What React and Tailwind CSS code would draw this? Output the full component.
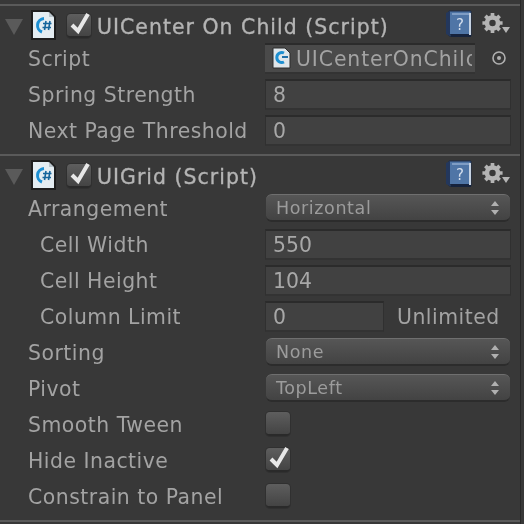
import React from "react";

function Doc({ small }) {
  if (small) {
    return (
      <svg width="19" height="22" viewBox="0 0 19 22" className="shrink-0">
        <path d="M1 1h12l5 5v15H1z" fill="#dfe6ea" stroke="#2c2c2c" />
        <path d="M12 6a5 5 0 1 0 0 9" fill="none" stroke="#1e8fd0" strokeWidth="3" />
        <path d="M10 10h6" stroke="#1e6fa8" strokeWidth="2" />
      </svg>
    );
  }
  return (
    <svg width="25" height="30" viewBox="0 0 25 30" className="shrink-0">
      <path d="M1 1h17l6 6v22H1z" fill="#e4edf2" stroke="#1e1e1e" strokeWidth="2" />
      <path d="M18 2l5 5h-5z" fill="#b9c4cb" />
      <path d="M13 8.5a7 7 0 0 0-2 13.5" fill="none" stroke="#1c8fd3" strokeWidth="3" />
      <path d="M15 11l-1.5 9M19 11l-1.5 9M12 13.5h8.5M11.5 17.5h8.5" stroke="#17669c" strokeWidth="1.6" fill="none" />
    </svg>
  );
}

function Check({ checked }) {
  return (
    <span className="relative block w-[24px] h-[24px] shrink-0 rounded-[4px] border-b-2 border-b-[#2a2a2a] bg-gradient-to-b from-[#5e5e5e] to-[#444444] shadow-[0_0_0_1px_#303030]">
      {checked && (
        <svg width="26" height="26" viewBox="0 0 26 26" className="absolute left-[0px] top-[-3px]">
          <path d="M5 14l6 6 10-17" fill="none" stroke="#e8e8e8" strokeWidth="4" />
        </svg>
      )}
    </span>
  );
}

function Book() {
  return (
    <svg width="27" height="28" viewBox="0 0 27 28" className="shrink-0">
      <path d="M4 1h22v25H4z" fill="#4f75a6" stroke="#1c2a44" />
      <path d="M1 3l4-2v25l-4-2z" fill="#23375c" />
      <path d="M5 24h21v3H6z" fill="#16233d" />
      <path d="M24 3h2v22h-2z" fill="#c6d2e2" />
      <path d="M7 3h17v2H7z" fill="#7f9dc4" />
      <text x="15" y="20" textAnchor="middle" fontFamily="'DejaVu Sans', sans-serif" fontSize="15" fill="#d4deec">?</text>
    </svg>
  );
}

function Gear() {
  return (
    <span className="relative block w-[29px] h-[24px] shrink-0">
      <svg width="23" height="22" viewBox="0 0 24 24" className="absolute left-0 top-0">
        <circle cx="12" cy="12" r="6" fill="none" stroke="#b4b4b4" strokeWidth="5" />
        <path
          d="M12 1v5M12 18v5M1 12h5M18 12h5M4.2 4.2l3.6 3.6M16.2 16.2l3.6 3.6M19.8 4.2l-3.6 3.6M7.8 16.2l-3.6 3.6"
          stroke="#b4b4b4"
          strokeWidth="4"
        />
      </svg>
      <svg width="8" height="6" viewBox="0 0 8 6" className="absolute left-[21px] top-[15px]">
        <path d="M0 0h8L4 6z" fill="#b4b4b4" />
      </svg>
    </span>
  );
}

function Header({ title }) {
  return (
    <div className="flex items-center h-[32px] pt-[3px]">
      <svg width="18" height="16" viewBox="0 0 18 16" className="ml-[5px] mt-[2px] shrink-0">
        <path d="M0 0h18L9 16z" fill="#5a5a5a" />
      </svg>
      <span className="ml-[8px] -mt-[1px]"><Doc /></span>
      <span className="ml-[11px]"><Check checked /></span>
      <span className="ml-[6px] mt-[3px] text-[#b4b4b4] text-[20.4px] tracking-[1.05px] [-webkit-text-stroke:0.35px_#b4b4b4] whitespace-nowrap">{title}</span>
      <span className="ml-auto mr-[10px] flex items-center gap-[9px]">
        <span className="-mt-[3px]"><Book /></span>
        <span className="-mt-[4px]"><Gear /></span>
      </span>
    </div>
  );
}

function Row({ label, indent, children }) {
  return (
    <div className="flex items-center h-9">
      <div className={(indent ? "pl-[40px]" : "pl-[28px]") + " w-[265px] shrink-0 pt-[2px] text-[#a3a3a3] tracking-[0.5px] whitespace-nowrap"}>{label}</div>
      <div className="flex-1 flex items-center min-w-0">{children}</div>
    </div>
  );
}

function Field({ value, narrow }) {
  return (
    <div className={(narrow ? "w-[119px]" : "w-[246px]") + " h-[31px] flex items-center pl-[7px] pt-[2px] bg-[#414141] border-t-2 border-t-[#2b2b2b] border-l border-l-[#303030] border-r border-r-[#303030] border-b-2 border-b-[#333333] text-[#a8a8a8]"}>
      {value}
    </div>
  );
}

function Select({ value }) {
  return (
    <div className="ml-[1px] w-[244px] h-[28px] flex items-center justify-between pl-[10px] pr-[11px] rounded-[6px] border-t border-t-[#6f6f6f] border-b-2 border-b-[#2c2c2c] bg-gradient-to-b from-[#565656] to-[#434343] text-[#9c9c9c] text-[17.5px]">
      <span className="pt-[2px] tracking-[0.6px]">{value}</span>
      <svg width="8" height="14" viewBox="0 0 8 14">
        <path d="M4 0l4 5H0zM4 14l4-5H0z" fill="#b0b0b0" />
      </svg>
    </div>
  );
}

function Divider() {
  return <div className="h-[2px] bg-[#5a5a5a]" />;
}

export default function App() {
  return (
    <div
      className="w-[524px] h-[524px] overflow-hidden bg-[#383838] text-[20.4px] leading-none"
      style={{ fontFamily: "'DejaVu Sans', sans-serif" }}
    >
      <div className="w-[521px] h-full border-r border-r-[#282828] blur-[0.35px]">
        <div className="h-[4px]" />
        <Divider />
        <div className="h-[2px]" />
        <Header title="UICenter On Child (Script)" />
        <Row label="Script">
          <div className="w-[210px] h-[31px] flex items-center pl-[7px] pr-[3px] gap-[5px] bg-[#4a4a4a] border-t-2 border-t-[#2b2b2b] border-b-2 border-b-[#333333]">
            <Doc small />
            <span className="flex-1 min-w-0 pt-[2px] overflow-hidden text-[#a3a3a3] tracking-[0.9px] whitespace-nowrap">UICenterOnChild</span>
          </div>
          <svg width="16" height="16" viewBox="0 0 16 16" className="ml-[16px]">
            <circle cx="8" cy="8" r="6" fill="none" stroke="#b0b0b0" strokeWidth="1.6" />
            <circle cx="8" cy="8" r="2" fill="#b0b0b0" />
          </svg>
        </Row>
        <Row label="Spring Strength"><Field value="8" /></Row>
        <Row label="Next Page Threshold"><Field value="0" /></Row>
        <div className="h-[6px]" />
        <Divider />
        <div className="h-[2px]" />
        <Header title="UIGrid (Script)" />
        <Row label="Arrangement"><Select value="Horizontal" /></Row>
        <Row label="Cell Width" indent><Field value="550" /></Row>
        <Row label="Cell Height" indent><Field value="104" /></Row>
        <Row label="Column Limit" indent>
          <Field value="0" narrow />
          <span className="ml-[13px] pt-[2px] text-[#a3a3a3] tracking-[0.5px]">Unlimited</span>
        </Row>
        <Row label="Sorting"><Select value="None" /></Row>
        <Row label="Pivot"><Select value="TopLeft" /></Row>
        <Row label="Smooth Tween"><span className="ml-[1px]"><Check /></span></Row>
        <Row label="Hide Inactive"><span className="ml-[1px]"><Check checked /></span></Row>
        <Row label="Constrain to Panel"><span className="ml-[1px]"><Check /></span></Row>
        <div className="h-[6px]" />
        <Divider />
      </div>
    </div>
  );
}
